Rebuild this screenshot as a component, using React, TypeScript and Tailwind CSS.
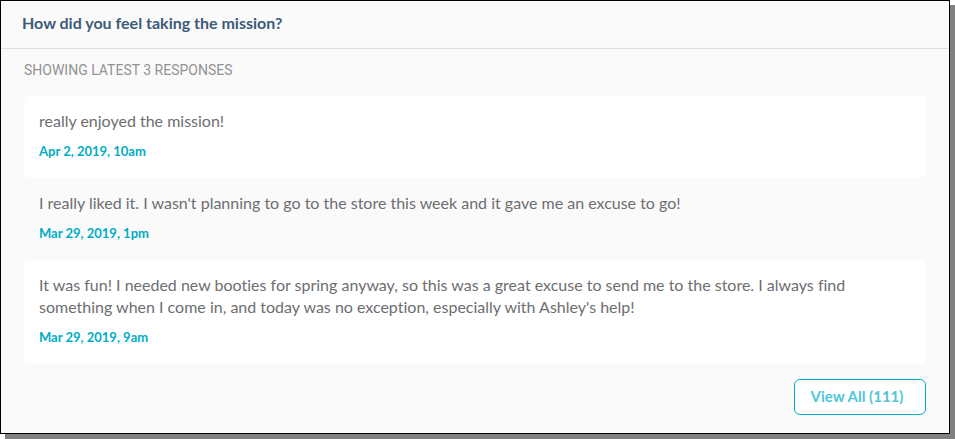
const responses = [
  { text: "really enjoyed the mission!", date: "Apr 2, 2019, 10am" },
  {
    text: "I really liked it. I wasn't planning to go to the store this week and it gave me an excuse to go!",
    date: "Mar 29, 2019, 1pm",
  },
  {
    text: "It was fun! I needed new booties for spring anyway, so this was a great excuse to send me to the store. I always find something when I come in, and today was no exception, especially with Ashley's help!",
    date: "Mar 29, 2019, 9am",
  },
];

export default function App() {
  return (
    <main className="bg-white pr-[5px] pb-[5px] font-['Lato',sans-serif] [font-variant-ligatures:none]">
      <section className="border border-black bg-[#fafafa] shadow-[5px_5px_0_#808080]">
        <h1 className="border-b border-[#e0e0e0] px-[21px] pt-[11px] pb-[14px] text-[16px] leading-[22px] font-bold text-[#3d5a78]">
          How did you feel taking the mission?
        </h1>
        <div className="px-[23px] pt-[11px] pb-[18px]">
          <h2 className="mb-4 font-['Roboto',sans-serif] text-[14px] leading-5 text-[#929292] uppercase">
            Showing latest 3 responses
          </h2>
          <ul>
            {responses.map((r) => (
              <li key={r.date} className="rounded-md px-[15px] pt-[14px] pb-4 odd:bg-white">
                <p className="text-[16px] leading-[22px] text-[#6d6e71]">{r.text}</p>
                <time className="mt-2 block text-[13px] leading-[22px] font-bold text-[#00adc4]">
                  {r.date}
                </time>
              </li>
            ))}
          </ul>
          <div className="mt-[15px] flex justify-end">
            <button
              type="button"
              className="h-9 w-[132px] rounded-md border border-[#00adc4] bg-white pr-1.5 pb-0.5 text-[15px] leading-5 font-bold text-[#4fc6d8]"
            >
              View All (111)
            </button>
          </div>
        </div>
      </section>
    </main>
  );
}
